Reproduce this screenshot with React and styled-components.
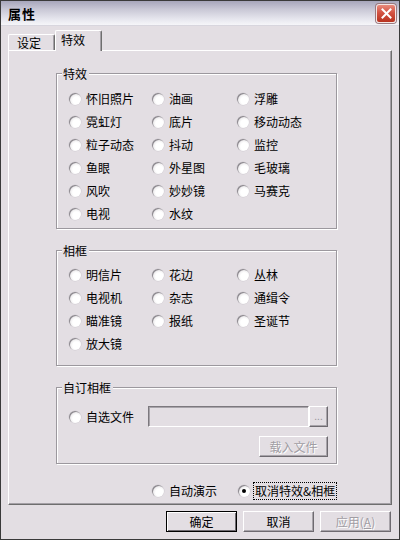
import React from "react";
import styled, { createGlobalStyle } from "styled-components";

const GlobalStyle = createGlobalStyle`
  html, body {
    margin: 0;
    padding: 0;
    background: #ffffff;
  }
  * {
    box-sizing: border-box;
  }
`;

const effects = [
  ["怀旧照片", "油画", "浮雕"],
  ["霓虹灯", "底片", "移动动态"],
  ["粒子动态", "抖动", "监控"],
  ["鱼眼", "外星图", "毛玻璃"],
  ["风吹", "妙妙镜", "马赛克"],
  ["电视", "水纹"],
];

const frames = [
  ["明信片", "花边", "丛林"],
  ["电视机", "杂志", "通缉令"],
  ["瞄准镜", "报纸", "圣诞节"],
  ["放大镜"],
];

function Radio({ label, checked, focused }) {
  return (
    <RadioItem>
      <RadioDot $checked={checked} />
      <RadioLabel $focused={focused}>{label}</RadioLabel>
    </RadioItem>
  );
}

function Group({ title, rows, ...rest }) {
  return (
    <GroupBox {...rest}>
      <Legend>{title}</Legend>
      <RadioGrid>
        {rows.flat().map((name) => (
          <Radio key={name} label={name} />
        ))}
      </RadioGrid>
    </GroupBox>
  );
}

export default function App() {
  return (
    <>
      <GlobalStyle />
      <Window>
        <TitleBar>
          <TitleText>属性</TitleText>
          <CloseButton>
            <svg width="11" height="11" viewBox="0 0 11 11">
              <path
                d="M1.5 1.5 L9.5 9.5 M9.5 1.5 L1.5 9.5"
                stroke="#fff"
                strokeWidth="2"
                strokeLinecap="square"
              />
            </svg>
          </CloseButton>
        </TitleBar>
        <Body>
          <TabRow>
            <Tab>设定</Tab>
            <Tab $active>特效</Tab>
          </TabRow>
          <Panel>
            <Group title="特效" rows={effects} $top={13} $bottom={3} />
            <Group title="相框" rows={frames} $top={12} $bottom={10} />
            <GroupBox $top={18} $bottom={6}>
              <Legend>自订相框</Legend>
              <FileRow>
                <FileChoice>
                  <Radio label="自选文件" />
                </FileChoice>
                <FileField />
                <BrowseButton>...</BrowseButton>
              </FileRow>
              <LoadRow>
                <DialogButton $disabled $width={69}>
                  载入文件
                </DialogButton>
              </LoadRow>
            </GroupBox>
            <ModeRow>
              <ModeCell>
                <Radio label="自动演示" />
              </ModeCell>
              <ModeCell>
                <Radio label="取消特效&相框" checked focused />
              </ModeCell>
            </ModeRow>
          </Panel>
          <ButtonRow>
            <DialogButton $default>确定</DialogButton>
            <DialogButton>取消</DialogButton>
            <DialogButton $disabled>
              应用(<u>A</u>)
            </DialogButton>
          </ButtonRow>
        </Body>
      </Window>
    </>
  );
}

const Window = styled.div`
  width: 400px;
  height: 540px;
  display: flex;
  flex-direction: column;
  background: #e3dee3;
  border: 1px solid #3a3a3a;
  font-family: "Noto Sans CJK SC", "DejaVu Sans", sans-serif;
  font-size: 12px;
  color: #000;
  overflow: hidden;
`;

const TitleBar = styled.div`
  height: 25px;
  flex: none;
  display: flex;
  align-items: center;
  justify-content: space-between;
  padding: 0 3px 0 7px;
  background: linear-gradient(
    180deg,
    #a7a6bb 0%,
    #c9c8d6 35%,
    #e6e6ee 75%,
    #f6f6f9 100%
  );
  border-bottom: 1px solid #d8d6de;
`;

const TitleText = styled.div`
  font-size: 13px;
  font-weight: bold;
  letter-spacing: 1px;
`;

const CloseButton = styled.div`
  width: 20px;
  height: 19px;
  display: flex;
  align-items: center;
  justify-content: center;
  border-radius: 3px;
  border: 1px solid #f4e6e4;
  background: linear-gradient(180deg, #e88a7c 0%, #d35343 45%, #b8321f 100%);
  box-shadow: 0 0 0 1px #9a7a80;
`;

const Body = styled.div`
  flex: 1;
  display: flex;
  flex-direction: column;
  padding: 4px 7px 0 7px;
`;

const TabRow = styled.div`
  height: 20px;
  display: flex;
  align-items: flex-end;
  position: relative;
  z-index: 1;
`;

const Tab = styled.div`
  width: 47px;
  height: ${({ $active }) => ($active ? "21px" : "16px")};
  margin-bottom: ${({ $active }) => ($active ? "-1px" : "0")};
  padding: ${({ $active }) => ($active ? "1px 0 0 5px" : "0 0 0 8px")};
  background: #e3dee3;
  border-style: solid;
  border-width: 1px 1px 0 1px;
  border-color: #ffffff #6e6e6e #ffffff #ffffff;
  border-radius: 2px 2px 0 0;
  box-shadow: inset -1px 0 0 #a4a0a6;
  line-height: 15px;
`;

const Panel = styled.div`
  height: 455px;
  flex: none;
  display: flex;
  flex-direction: column;
  gap: 21px;
  padding: 22px 0 0 47px;
  border-style: solid;
  border-width: 1px;
  border-color: #ffffff #6e6e6e #6e6e6e #ffffff;
  box-shadow: inset -1px -1px 0 #a4a0a6;
`;

const GroupBox = styled.div`
  position: relative;
  width: 281px;
  padding: ${({ $top, $bottom }) => `${$top}px 8px ${$bottom}px 12px`};
  border: 1px solid #9c989e;
  box-shadow: 1px 1px 0 #ffffff, inset 1px 1px 0 #ffffff;
`;

const Legend = styled.div`
  position: absolute;
  left: 5px;
  top: -8px;
  padding: 0 2px 0 1px;
  background: #e3dee3;
  line-height: 15px;
`;

const RadioGrid = styled.div`
  display: grid;
  grid-template-columns: 83px 85px 1fr;
  grid-auto-rows: 23px;
  align-items: center;
`;

const RadioItem = styled.div`
  display: flex;
  align-items: center;
  gap: 4px;
  white-space: nowrap;
`;

const RadioDot = styled.span`
  position: relative;
  width: 12px;
  height: 12px;
  flex: none;
  border-radius: 50%;
  background: radial-gradient(
    circle at 62% 62%,
    #ffffff 0%,
    #ffffff 35%,
    #e2dfe2 75%,
    #c4c0c6 100%
  );
  box-shadow: inset 1px 1px 0 #8c888e, 0 0 0 0.5px #d0ccd2;

  &::after {
    content: "";
    display: ${({ $checked }) => ($checked ? "block" : "none")};
    position: absolute;
    left: 4px;
    top: 4px;
    width: 4px;
    height: 4px;
    border-radius: 50%;
    background: #000;
  }
`;

const RadioLabel = styled.span`
  line-height: 14px;
  padding: 1px 1px;
  outline: ${({ $focused }) => ($focused ? "1px dotted #000" : "none")};
`;

const FileRow = styled.div`
  display: flex;
  align-items: center;
  height: 21px;
`;

const FileChoice = styled.div`
  width: 79px;
`;

const FileField = styled.div`
  width: 161px;
  height: 21px;
  border-style: solid;
  border-width: 1px;
  border-color: #7c787e #ffffff #ffffff #7c787e;
  box-shadow: inset 1px 1px 0 #a8a4aa;
  background: #e3dee3;
`;

const BrowseButton = styled.div`
  width: 19px;
  height: 21px;
  display: flex;
  align-items: flex-end;
  justify-content: center;
  padding-bottom: 5px;
  font-size: 10px;
  line-height: 10px;
  color: #9a969c;
  border-style: solid;
  border-width: 1px;
  border-color: #ffffff #6e6a70 #6e6a70 #ffffff;
  box-shadow: inset -1px -1px 0 #a8a4aa;
`;

const LoadRow = styled.div`
  display: flex;
  justify-content: flex-end;
  margin-top: 9px;
`;

const ModeRow = styled.div`
  display: flex;
  margin: -2px 0 0 96px;
  height: 16px;
  align-items: center;
`;

const ModeCell = styled.div`
  width: 86px;
`;

const ButtonRow = styled.div`
  display: flex;
  justify-content: flex-end;
  gap: 6px;
  margin-top: 6px;
  padding-right: 1px;
`;

const DialogButton = styled.div`
  width: ${({ $width }) => ($width ? `${$width}px` : "71px")};
  height: 21px;
  display: flex;
  align-items: center;
  justify-content: center;
  line-height: 14px;
  color: ${({ $disabled }) => ($disabled ? "#a19da3" : "#000")};
  text-shadow: ${({ $disabled }) => ($disabled ? "1px 1px 0 #ffffff" : "none")};
  border-style: solid;
  border-width: 1px;
  border-color: ${({ $default }) =>
    $default ? "#000000" : "#ffffff #6e6a70 #6e6a70 #ffffff"};
  box-shadow: ${({ $default }) =>
    $default
      ? "inset 1px 1px 0 #ffffff, inset -1px -1px 0 #6e6a70"
      : "inset -1px -1px 0 #a8a4aa"};

  u {
    text-decoration: underline;
  }
`;
